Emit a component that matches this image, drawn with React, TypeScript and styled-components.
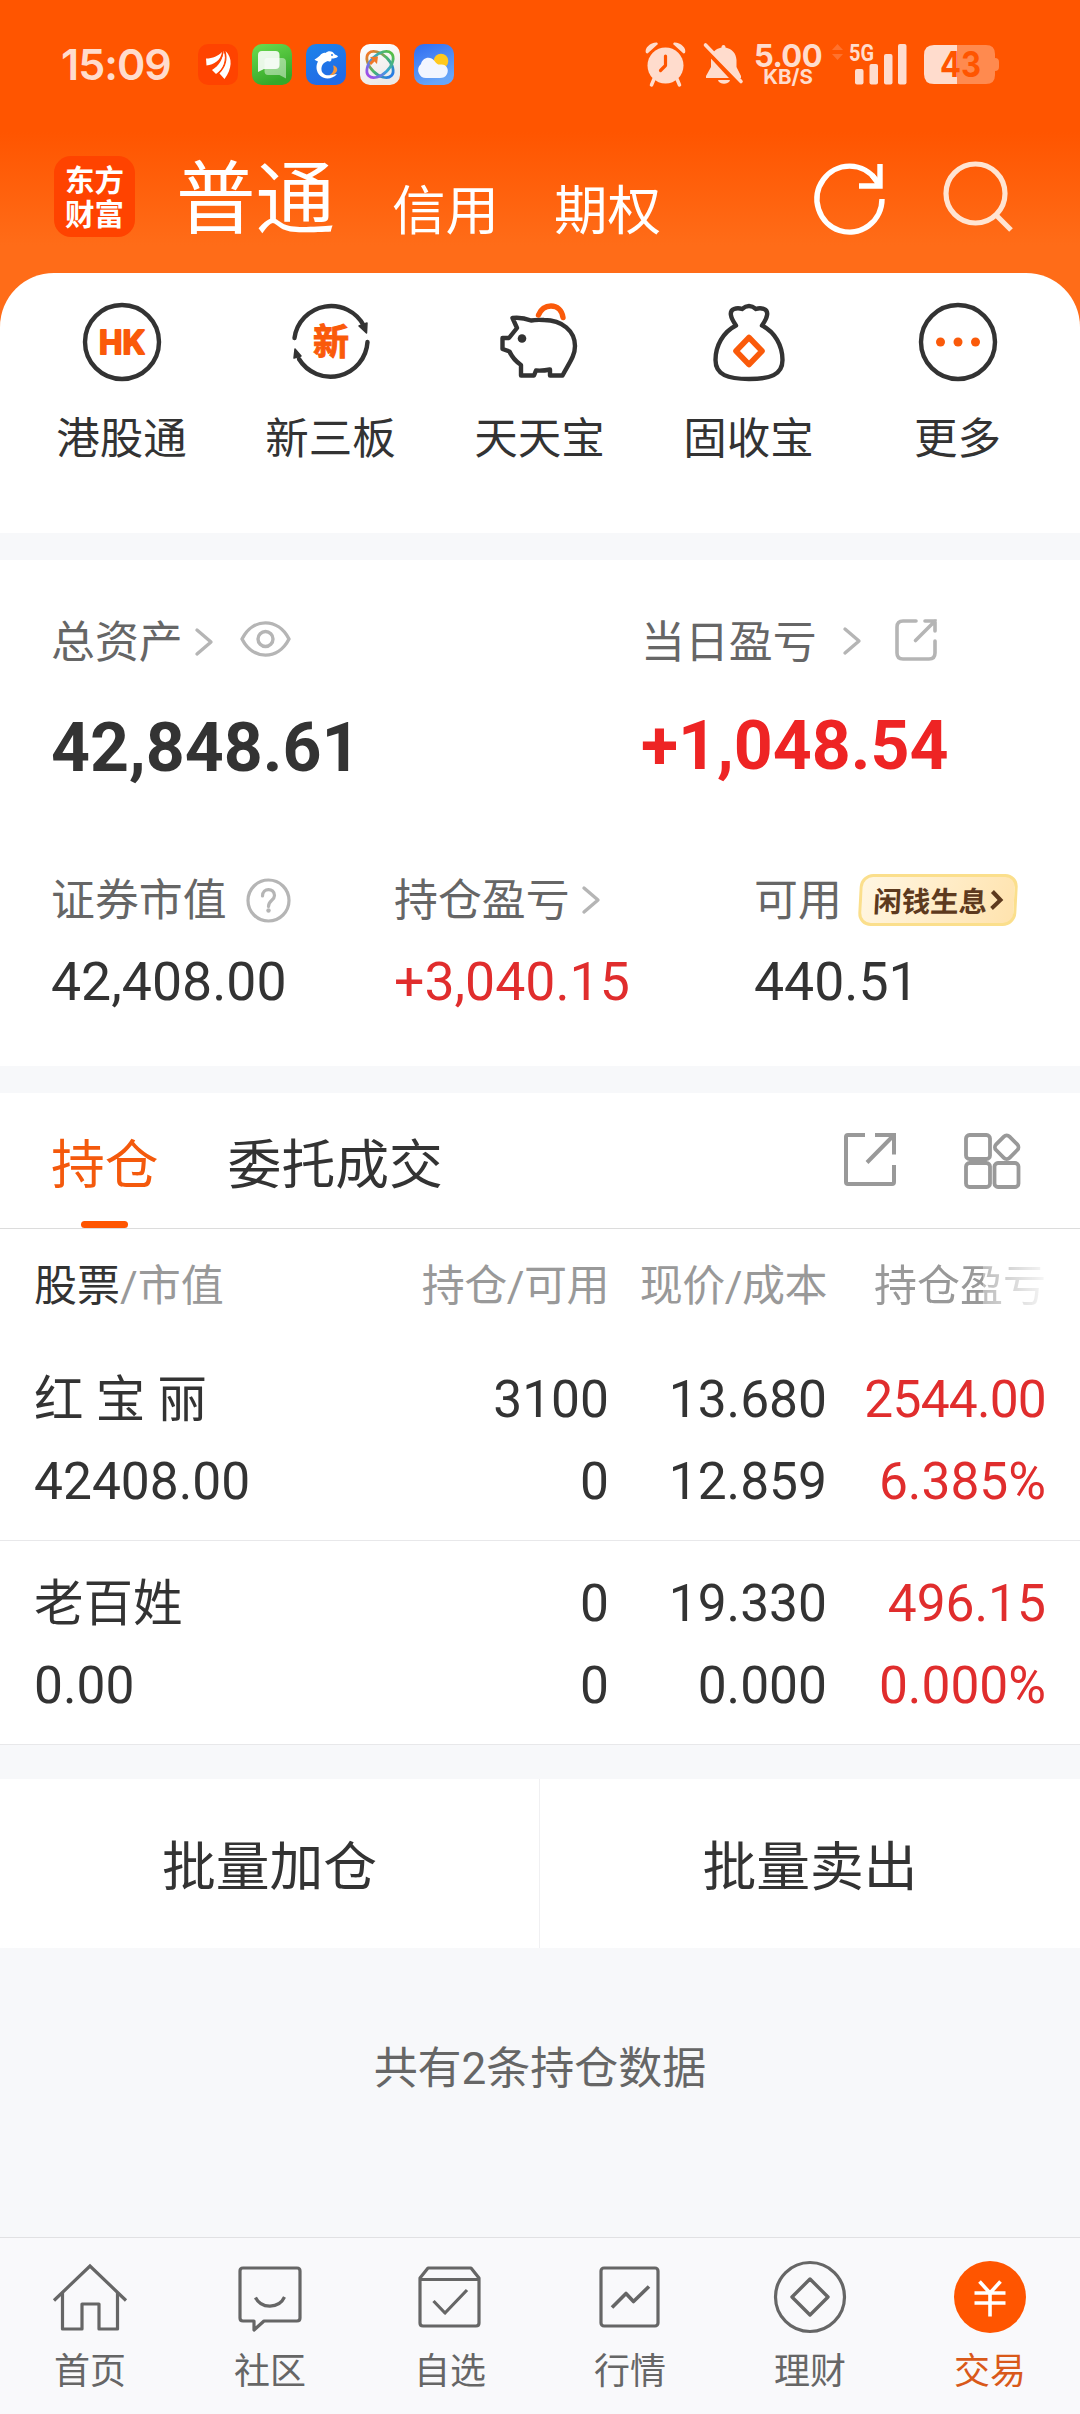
import React from "react";
import styled, { createGlobalStyle } from "styled-components";

const ORANGE = "#ff5500";
const INK = "#333333";
const RED = "#e02d2d";
const STATUS = "#ffdccd";

const GlobalStyle = createGlobalStyle`
  * { box-sizing: border-box; }
  body {
    margin: 0;
    background: #f7f8fa;
    font-family: Roboto, "Noto Sans CJK SC", sans-serif;
    color: ${INK};
  }
  svg { display: block; flex: none; overflow: visible; }
`;

const Screen = styled.div`
  width: 1080px;
  height: 2414px;
  display: flex;
  flex-direction: column;
  overflow: hidden;
  white-space: nowrap;
`;

/* ---------- header ---------- */

const Hero = styled.header`
  height: 533px;
  flex: none;
  display: flex;
  flex-direction: column;
  background: linear-gradient(180deg, ${ORANGE} 0, ${ORANGE} 132px, #ff6c18 245px, #ff6c18 100%);
`;

const StatusBar = styled.div`
  height: 128px;
  flex: none;
  display: flex;
  align-items: center;
  padding: 0 81px 0 61px;
  color: ${STATUS};
`;

const Clock = styled.span`
  width: 137px;
  font: 600 43px/50px Inter, Roboto, sans-serif;
  letter-spacing: -1px;
`;

const AppIcons = styled.div`
  display: flex;
  gap: 14px;
  flex: 1;
`;

const StatusGroup = styled.div`
  display: flex;
  align-items: center;
`;

const NetSpeed = styled.div`
  width: 70px;
  margin: 0 9px 0 9px;
  display: flex;
  flex-direction: column;
  align-items: center;
  font-family: Inter, Roboto, sans-serif;
`;

const SpeedValue = styled.span`
  font-size: 31px;
  font-weight: 700;
  line-height: 25px;
  letter-spacing: -0.6px;
`;

const SpeedUnit = styled.span`
  font-size: 20.5px;
  font-weight: 700;
  line-height: 18px;
`;

const TitleBar = styled.div`
  height: 145px;
  flex: none;
  display: flex;
  align-items: flex-start;
  padding: 28px 66px 0 54px;
  color: #fff;
`;

const Logo = styled.div`
  width: 81px;
  height: 81px;
  border-radius: 17px;
  background: #ff4300;
  display: flex;
  flex-direction: column;
  align-items: center;
  justify-content: center;
  font: 700 29.5px/34px "Noto Sans CJK SC", sans-serif;
  padding-bottom: 3px;
`;

const AccountTabs = styled.nav`
  display: flex;
  align-items: flex-start;
  flex: 1;
  margin-left: 41px;
`;

const AccountTab = styled.span<{ $current?: boolean }>`
  font-size: ${(p) => (p.$current ? 79.5 : 53.5)}px;
  line-height: 90px;
  padding-top: ${(p) => (p.$current ? 0 : 12)}px;
  margin-right: ${(p) => (p.$current ? 57 : 55)}px;
  margin-top: -1px;
`;

const TitleActions = styled.div`
  display: flex;
  gap: 57px;
  padding-top: 5px;
`;

const Shortcuts = styled.section`
  flex: 1;
  display: grid;
  grid-template-columns: repeat(5, 209px);
  justify-content: center;
  background: #fff;
  border-radius: 54px 54px 0 0;
  padding: 29px 1px 0 0;
`;

const Shortcut = styled.div`
  display: flex;
  flex-direction: column;
  align-items: center;
  font-size: 43.5px;
  line-height: 60px;
  gap: 28px;
`;

/* ---------- assets ---------- */

const Assets = styled.section`
  height: 506px;
  margin-top: 27px;
  flex: none;
  background: #fff;
  padding: 41px 0 0 51px;
`;

const AssetRow = styled.div<{ $cols: string; $top?: number }>`
  display: grid;
  grid-template-columns: ${(p) => p.$cols};
  margin-top: ${(p) => p.$top ?? 0}px;
`;

const Label = styled.div`
  display: flex;
  align-items: center;
  height: 84px;
  font-size: 43.9px;
  line-height: 84px;
  color: #666;
`;

const Lifted = styled.span<{ $by: number; $before: number }>`
  margin-left: ${(p) => p.$before}px;
  margin-bottom: ${(p) => p.$by * 2}px;
`;

const Gap = styled.span<{ $w: number }>`
  width: ${(p) => p.$w}px;
  flex: none;
`;

const BigValue = styled.div<{ $up?: boolean }>`
  font-size: 68px;
  font-weight: 700;
  line-height: 120px;
  padding-top: ${(p) => (p.$up ? 1 : 3)}px;
  margin-bottom: ${(p) => (p.$up ? 2 : 0)}px;
  color: ${(p) => (p.$up ? "#ee2424" : INK)};
`;

const Value = styled.div<{ $up?: boolean }>`
  padding-top: 1px;
  font-size: 53.6px;
  line-height: 76px;
  color: ${(p) => (p.$up ? RED : INK)};
`;

const Promo = styled.div`
  width: 158px;
  height: 52px;
  margin: 0 0 2px 17px;
  display: flex;
  align-items: center;
  justify-content: center;
  gap: 2px;
  border: 3px solid #fbdf8c;
  border-radius: 13px;
  background: linear-gradient(110deg, #fff6e2, #ffe3ae);
  transform: skewX(-3deg);
  font: 700 28.5px/44px "Noto Sans CJK SC", sans-serif;
  color: #5d3a1e;
`;

/* ---------- holdings ---------- */

const Holdings = styled.section`
  margin-top: 27px;
  flex: none;
  background: #fff;
`;

const TabBar = styled.div`
  height: 136px;
  display: flex;
  border-bottom: 1px solid #dcdcdc;
  padding: 0 59px 0 51px;
`;

const Tab = styled.div<{ $active?: boolean }>`
  display: flex;
  flex-direction: column;
  align-items: center;
  justify-content: space-between;
  margin-right: 69px;
  padding-top: 33px;
  font-size: 53.8px;
  line-height: 80px;
  color: ${(p) => (p.$active ? "#f4590c" : INK)};
`;

const Underline = styled.i`
  width: 47px;
  height: 7px;
  border-radius: 4px;
  background: ${ORANGE};
`;

const TabTools = styled.div`
  margin-left: auto;
  display: flex;
  gap: 68px;
  padding-top: 40px;
`;

const TableLine = styled.div`
  display: grid;
  grid-template-columns: 375px 200px 218px 219px;
  padding: 0 34px 0 34px;
  text-align: right;

  > :first-child { text-align: left; }
`;

const TableHead = styled(TableLine)`
  height: 108px;
  padding-top: 8px;
  font-size: 43px;
  line-height: 99px;
  color: #999;
`;

const Strong = styled.span`
  color: ${INK};
`;

const PairHead = styled.span`
  letter-spacing: -0.5px;
`;

const Faded = styled.span`
  mask-image: linear-gradient(90deg, #000 156px, rgba(0, 0, 0, 0.65) 156px, rgba(0, 0, 0, 0.08) 100%);
`;

const Stock = styled.div`
  height: 204px;
  padding-top: 22px;
  border-bottom: 1px solid #e8e8ea;
`;

const StockLine = styled(TableLine)`
  font-size: 51.5px;
  line-height: 82px;
`;

const StockName = styled.span`
  font-size: 49.5px;
`;

const Gain = styled.span<{ $tight?: boolean }>`
  color: ${RED};
  letter-spacing: ${(p) => (p.$tight ? "-0.8px" : "0")};
`;

const Actions = styled.div`
  height: 169px;
  margin-top: 34px;
  flex: none;
  display: grid;
  grid-template-columns: 1fr 1fr;
  background: #fff;
`;

const Action = styled.button`
  border: 0;
  border-right: 1px solid #f0f0f2;
  background: none;
  padding: 9px 0 0;
  font: 400 53.8px/160px Roboto, "Noto Sans CJK SC", sans-serif;
  color: ${INK};

  &:last-child { border-right: 0; }
`;

const Summary = styled.div`
  flex: 1;
  padding-top: 91px;
  text-align: center;
  font-size: 44px;
  line-height: 60px;
  color: #666;
`;

/* ---------- bottom navigation ---------- */

const BottomNav = styled.nav`
  height: 177px;
  flex: none;
  display: grid;
  grid-template-columns: repeat(6, 1fr);
  border-top: 1px solid #e1e1e3;
  background: #f9f9fb;
`;

const NavItem = styled.div<{ $active?: boolean }>`
  display: flex;
  flex-direction: column;
  align-items: center;
  gap: 17px;
  padding-top: 23px;
  font-size: 36px;
  line-height: 44px;
  color: ${(p) => (p.$active ? "#d9591a" : "#666")};
`;

/* ---------- icons ---------- */

const AppTile = ({ id, from, to, children }: { id: string; from: string; to: string; children: React.ReactNode }) => (
  <svg width="40" height="41" viewBox="0 0 40 41">
    <defs>
      <linearGradient id={id} x1="0" y1="0" x2="0.4" y2="1">
        <stop offset="0" stopColor={from} />
        <stop offset="1" stopColor={to} />
      </linearGradient>
    </defs>
    <rect width="40" height="41" rx="10" fill={`url(#${id})`} />
    {children}
  </svg>
);

const WingApp = () => (
  <AppTile id="wing" from="#ff4300" to="#ff4300">
    <g fill="#fff">
      <path d="M8 14.500C15 14.500 20 12 24 8C23 16 16 21 8.500 21.500Z" />
      <path d="M14 26C21 22 25 15 25.500 7C30 16 26 24 18 30Z" />
      <path d="M27.500 7C35 14 34 25 26.500 35L21.500 29.500C28 23 30 15 27.500 7Z" />
    </g>
    <path d="M12 24C20 21 24 15 25 8M18.500 31C26 25 29 16 26.500 7" stroke="#ff4300" strokeWidth="1" fill="none" />
  </AppTile>
);

const ChatApp = () => (
  <AppTile id="chat" from="#6cdc4f" to="#35a82a">
    <path d="M14 14H30Q34 14 34 18V34.500L27.500 31H16Q12.500 31 12.500 27V16Z" fill="#fff" opacity="0.45" />
    <path d="M10 7H23.500Q27.500 7 27.500 11V21Q27.500 25 23.500 25H12L6 28V11Q6 7 10 7Z" fill="#fff" opacity="0.88" />
  </AppTile>
);

const DolphinApp = () => (
  <AppTile id="dolphin" from="#1d83ea" to="#216be6">
    <path
      d="M8.500 15.500C11 14 12.500 13 14 11.500C15.500 9.500 18 8.500 19.500 9C22 6.500 26 6.500 28 9.500C29 11 31 11 32 12.500C31 14 28 14.500 25.500 14.500C25.500 17 24.500 18.500 22 17C18 18 15 21 15.500 26C16 30 20 32 24.500 31L31 30C27 35 19 36 14.500 32C10 28 9.500 22 12 17.500C10.500 16.500 9 16.500 8.500 15.500Z"
      fill="#fff"
    />
    <circle cx="26" cy="11" r="0.900" fill="#1d78e8" />
    <path d="M27 21.500C31 22 32.500 26 30 28.500C28.500 30.500 26 31.500 23.500 31C27.500 29 28.500 25 27 21.500Z" fill="#f6973b" />
  </AppTile>
);

const KnotApp = () => (
  <AppTile id="knot" from="#ffffff" to="#ece9e8">
    <defs>
      <linearGradient id="knotA" x1="0" y1="0" x2="1" y2="0">
        <stop offset="0" stopColor="#f07a2a" />
        <stop offset="0.5" stopColor="#49b86b" />
        <stop offset="1" stopColor="#267be8" />
      </linearGradient>
      <linearGradient id="knotB" x1="1" y1="0" x2="0" y2="0">
        <stop offset="0" stopColor="#54bd45" />
        <stop offset="0.5" stopColor="#36a5dc" />
        <stop offset="1" stopColor="#a04de8" />
      </linearGradient>
    </defs>
    <g fill="none" strokeWidth="2.800">
      <ellipse cx="20" cy="20.500" rx="16" ry="9.500" transform="rotate(45 20 20.500)" stroke="url(#knotA)" />
      <ellipse cx="20" cy="20.500" rx="16" ry="9.500" transform="rotate(-45 20 20.500)" stroke="url(#knotB)" />
    </g>
    <path d="M10 13L18 12.500L17 20L14.500 17.500L11 21L9 19L12.500 15.500Z" fill="#f07a2a" />
  </AppTile>
);

const WeatherApp = () => (
  <AppTile id="weather" from="#2f6df2" to="#68a6f7">
    <circle cx="27" cy="17" r="7.300" fill="#ffc91f" />
    <path d="M13 34A8 8 0 0 1 7 20C8 14 16 11 20.500 17C23 20 24 21 27 20.500C32 20 35.500 25 33 30C31.500 33 29 34 26 34Z" fill="#f2f6ff" />
  </AppTile>
);

const AlarmIcon = () => (
  <svg width="41" height="44" viewBox="0 0 41 44" fill={STATUS}>
    <circle cx="20.500" cy="23.500" r="18" />
    <path d="M1 11C-1 6 6 0 12 .5L13 2L2.500 11.500ZM40 11C42 6 35 0 29 .5L28 2L38.500 11.500Z" />
    <path d="M9 37L6.500 43M32 37L34.500 43" stroke={STATUS} strokeWidth="3.500" strokeLinecap="round" />
    <path d="M20.500 14V23.500L15.500 28.500" fill="none" stroke={ORANGE} strokeWidth="3.200" strokeLinecap="round" strokeLinejoin="round" />
  </svg>
);

const MutedBellIcon = () => (
  <svg width="41" height="42" viewBox="0 0 41 42" fill={STATUS}>
    <path d="M20.500 2C22 2 22.500 3 22.500 4.500C29 6 33 10 33.500 17V24L38 33V35H3V33L8 24V17C8 10 12 6 18.500 4.500C18.500 3 19 2 20.500 2Z" />
    <path d="M15 37H27C26 42 16 42 15 37Z" />
    <path d="M-2 1L34 40" stroke={ORANGE} strokeWidth="5" />
    <path d="M2.500 2L38 38.500" stroke={STATUS} strokeWidth="3.600" strokeLinecap="round" />
  </svg>
);

const SignalIcon = () => (
  <svg width="75" height="43" viewBox="0 0 75 43" fill={STATUS}>
    <path d="M0 7L5.500 1L11 7ZM0 11L5.500 17L11 11Z" opacity="0.22" />
    <text x="17" y="18" fontFamily="Roboto, sans-serif" fontWeight="700" fontSize="24" textLength="25" lengthAdjust="spacingAndGlyphs">5G</text>
    <rect x="23" y="26" width="8.500" height="15.500" rx="2" />
    <rect x="37.500" y="21" width="8.500" height="20.500" rx="2" />
    <rect x="52" y="11" width="8.500" height="30.500" rx="2" />
    <rect x="66" y="1" width="8.500" height="40.500" rx="2" />
  </svg>
);

const BatteryIcon = () => (
  <svg width="75" height="39" viewBox="0 0 75 39">
    <path d="M33 0H62Q71 0 71 9V30Q71 39 62 39H33ZM71 13Q75 13 75 17V22Q75 26 71 26Z" fill="#ff8a4f" />
    <path d="M33 0H10Q0 0 0 10V29Q0 39 10 39H33Z" fill={STATUS} />
    <text x="36.500" y="32" textAnchor="middle" fontFamily="Inter, Roboto, sans-serif" fontWeight="700" fontSize="35" fill={ORANGE} textLength="41" lengthAdjust="spacingAndGlyphs">43</text>
  </svg>
);

const RefreshIcon = () => (
  <svg width="72" height="72" viewBox="0 0 72 72" fill="none" stroke="#fff" strokeWidth="5.400">
    <path d="M68 38A32.500 33 0 1 1 62 19" />
    <path d="M66 3V25H45M66 25L58 14" />
  </svg>
);

const SearchIcon = () => (
  <svg width="71" height="72" viewBox="0 0 71 72" fill="none" stroke="#ffe4d2" strokeWidth="5.200">
    <circle cx="32.500" cy="32.500" r="29.500" />
    <path d="M53 54L68 69" />
  </svg>
);

const RingHK = () => (
  <svg width="80" height="80" viewBox="0 0 80 80">
    <circle cx="40" cy="40" r="37" fill="none" stroke={INK} strokeWidth="4.400" />
    <text x="40" y="52" textAnchor="middle" fontFamily="Inter, sans-serif" fontWeight="700" fontSize="33" fill="#fa5a0a" stroke="#fa5a0a" strokeWidth="2" strokeLinejoin="round" textLength="46" lengthAdjust="spacingAndGlyphs">HK</text>
  </svg>
);

const RingNew = () => (
  <svg width="80" height="80" viewBox="0 0 80 80" fill="none" stroke={INK} strokeWidth="4.400" strokeLinecap="round">
    <path d="M3.500 36A37 37 0 0 1 73 24M76.500 40A37 37 0 0 1 8 57" />
    <path d="M68 24L76 21L75.500 31ZM4 47L10 54L3 56Z" fill={INK} strokeWidth="1.500" strokeLinejoin="round" />
    <text x="40" y="53" textAnchor="middle" fontFamily="'Noto Sans CJK SC', sans-serif" fontWeight="700" fontSize="36" fill="#fa5a0a" stroke="#fa5a0a" strokeWidth="1">新</text>
  </svg>
);

const PigIcon = () => (
  <svg width="80" height="80" viewBox="0 0 80 80" fill="none" stroke={INK} strokeWidth="4.400" strokeLinejoin="round">
    <path d="M12.500 16Q22 15 31 18.500Q36 17.500 44 18C62 18 75 29 75 44C75 54 69 61 62.500 73.500H50V67.500Q43 69 36 68.500L34 73.500H21V63C15 59 11.500 54 9.500 49.500L2.500 47V36H9L17 26Z" />
    <circle cx="22" cy="36.500" r="4.300" fill={INK} stroke="none" />
    <path d="M38.500 13C41 7 46 4 51 4C57 4 62 8 63 15.500" stroke="#fa5a0a" strokeWidth="5.400" strokeLinecap="round" />
  </svg>
);

const BagIcon = () => (
  <svg width="80" height="80" viewBox="0 0 80 80" fill="none" stroke={INK} strokeWidth="4.400" strokeLinejoin="round">
    <path d="M27 23.500C21 15 20 9 25 7Q29 5.500 33 7Q40 1 47 7Q51 5.500 55 7C60 9 59 15 53 23.500C66 30 73.500 44 73.500 58C73.500 73 61 77 40 77C19 77 6.500 73 6.500 58C6.500 44 14 30 27 23.500Z" />
    <path d="M40 35.500L53 49L40 62.500L27 49Z" stroke="#fa5a0a" strokeWidth="5.600" />
    <path d="M29 23L25 20M51 23L55 20" stroke="none" />
  </svg>
);

const MoreIcon = () => (
  <svg width="80" height="80" viewBox="0 0 80 80">
    <circle cx="40" cy="40" r="37" fill="none" stroke={INK} strokeWidth="4.400" />
    {[22.5, 40, 57.5].map((cx) => (
      <circle key={cx} cx={cx} cy="40" r="4.500" fill="#fa5a0a" />
    ))}
  </svg>
);

const Chevron = () => (
  <svg width="18" height="28" viewBox="0 0 18 28" fill="none" stroke="#b5b5b5" strokeWidth="3.400" strokeLinecap="round" strokeLinejoin="round">
    <path d="M2 2L16 14L2 26" />
  </svg>
);

const EyeIcon = () => (
  <svg width="51" height="36" viewBox="0 0 51 36" fill="none" stroke="#b5b5b5" strokeWidth="3.400">
    <path d="M2 18C13 -3.500 38 -3.500 49 18C38 39.500 13 39.500 2 18Z" strokeLinejoin="round" />
    <circle cx="25.500" cy="18" r="7.500" />
  </svg>
);

const HelpIcon = () => (
  <svg width="45" height="45" viewBox="0 0 45 45" fill="none" stroke="#b5b5b5" strokeWidth="3.200">
    <circle cx="22.500" cy="22.500" r="20.500" />
    <path d="M16.500 18C16.500 9.500 28.500 9.500 28.500 17.500C28.500 22.500 22.500 22 22.500 28.500" strokeLinecap="round" />
    <circle cx="22.500" cy="32.500" r="2.200" fill="#b5b5b5" stroke="none" />
  </svg>
);

const ShareRound = () => (
  <svg width="42" height="42" viewBox="0 0 42 42" fill="none" stroke="#b5b5b5" strokeWidth="3.600" strokeLinecap="round">
    <path d="M21 2H8Q2 2 2 8V34Q2 40 8 40H34Q40 40 40 34V22" />
    <path d="M30 2H40V12M40 2L20.500 21.500" />
  </svg>
);

const ShareSquare = () => (
  <svg width="52" height="53" viewBox="0 0 52 53" fill="none" stroke="#999" strokeWidth="4">
    <path d="M21 2H4Q2 2 2 4V49Q2 51 4 51H48Q50 51 50 49V32" />
    <path d="M31 2H50V21.500M50 2L23 29.500" />
  </svg>
);

const GridIcon = () => (
  <svg width="57" height="55" viewBox="0 0 57 55" fill="none" stroke="#999" strokeWidth="3.800">
    <rect x="2" y="2" width="24" height="24" rx="3.500" />
    <rect x="2" y="30" width="24" height="24" rx="3.500" />
    <rect x="30.500" y="30" width="24" height="24" rx="3.500" />
    <rect x="33.200" y="4.700" width="19" height="19" rx="4" transform="rotate(45 42.700 14.200)" />
  </svg>
);

const NavSvg = ({ children }: { children: React.ReactNode }) => (
  <svg width="72" height="72" viewBox="0 0 72 72" fill="none" stroke="#666" strokeWidth="3.200" strokeLinejoin="round">
    {children}
  </svg>
);

const HomeIcon = () => (
  <NavSvg>
    <path d="M0 39.500L36 5L72 39.500" strokeLinejoin="miter" />
    <path d="M8.500 32V68H28V43H45V68H63.500V32" />
  </NavSvg>
);

const CommunityIcon = () => (
  <NavSvg>
    <path d="M9 7H63Q66 7 66 10V57Q66 60 63 60H30L20 69V60H9Q6 60 6 57V10Q6 7 9 7Z" />
    <path d="M21.500 36.500C27 48 45 48 50.500 36" />
  </NavSvg>
);

const WatchlistIcon = () => (
  <NavSvg>
    <path d="M6 17L14 7H57L65 17V62Q65 65 62 65H9Q6 65 6 62ZM6 18.500H65" />
    <path d="M19.500 40L31 52L53 29" />
  </NavSvg>
);

const MarketIcon = () => (
  <NavSvg>
    <rect x="7" y="7" width="57" height="58" rx="3" />
    <path d="M18 46.500L32 32.500L39.500 40.500L55 25.500" strokeWidth="3.600" />
  </NavSvg>
);

const WealthIcon = () => (
  <NavSvg>
    <circle cx="36" cy="36" r="34.500" />
    <path d="M36 18L54 36L36 54L18 36Z" strokeWidth="3.400" />
  </NavSvg>
);

const TradeIcon = () => (
  <NavSvg>
    <circle cx="36" cy="36" r="36" fill={ORANGE} stroke="none" />
    <path d="M25.500 20.500L36 32L46.500 20.500M20.500 32H51.500M20.500 42H51.500M36 32V55.500" stroke="#fff" strokeWidth="3.600" />
  </NavSvg>
);

/* ---------- data ---------- */

const shortcuts = [
  { label: "港股通", Icon: RingHK },
  { label: "新三板", Icon: RingNew },
  { label: "天天宝", Icon: PigIcon },
  { label: "固收宝", Icon: BagIcon },
  { label: "更多", Icon: MoreIcon },
];

const stocks = [
  { name: "红 宝 丽", value: "42408.00", held: "3100", free: "0", price: "13.680", cost: "12.859", gain: "2544.00", rate: "6.385%" },
  { name: "老百姓", value: "0.00", held: "0", free: "0", price: "19.330", cost: "0.000", gain: "496.15", rate: "0.000%" },
];

const navItems = [
  { label: "首页", Icon: HomeIcon },
  { label: "社区", Icon: CommunityIcon },
  { label: "自选", Icon: WatchlistIcon },
  { label: "行情", Icon: MarketIcon },
  { label: "理财", Icon: WealthIcon },
  { label: "交易", Icon: TradeIcon, active: true },
];

export default function App() {
  return (
    <Screen>
      <GlobalStyle />
      <Hero>
        <StatusBar>
          <Clock>15:09</Clock>
          <AppIcons>
            <WingApp />
            <ChatApp />
            <DolphinApp />
            <KnotApp />
            <WeatherApp />
          </AppIcons>
          <StatusGroup>
            <AlarmIcon />
            <Gap $w={17} />
            <MutedBellIcon />
            <NetSpeed>
              <SpeedValue>5.00</SpeedValue>
              <SpeedUnit>KB/S</SpeedUnit>
            </NetSpeed>
            <SignalIcon />
            <Gap $w={17} />
            <BatteryIcon />
          </StatusGroup>
        </StatusBar>
        <TitleBar>
          <Logo>
            <span>东方</span>
            <span>财富</span>
          </Logo>
          <AccountTabs>
            <AccountTab $current>普通</AccountTab>
            <AccountTab>信用</AccountTab>
            <AccountTab>期权</AccountTab>
          </AccountTabs>
          <TitleActions>
            <RefreshIcon />
            <SearchIcon />
          </TitleActions>
        </TitleBar>
        <Shortcuts>
          {shortcuts.map(({ label, Icon }) => (
            <Shortcut key={label}>
              <Icon />
              <span>{label}</span>
            </Shortcut>
          ))}
        </Shortcuts>
      </Hero>

      <Assets>
        <AssetRow $cols="590px 1fr">
          <div>
            <Label>
              总资产
              <Lifted $before={12} $by={1}>
                <Chevron />
              </Lifted>
              <Lifted $before={27} $by={4}>
                <EyeIcon />
              </Lifted>
            </Label>
            <BigValue>42,848.61</BigValue>
          </div>
          <div>
            <Label>
              当日盈亏
              <Lifted $before={26} $by={2}>
                <Chevron />
              </Lifted>
              <Lifted $before={34} $by={3}>
                <ShareRound />
              </Lifted>
            </Label>
            <BigValue $up>+1,048.54</BigValue>
          </div>
        </AssetRow>
        <AssetRow $cols="343px 360px 1fr" $top={51}>
          <div>
            <Label>
              证券市值
              <Lifted $before={19} $by={1}>
                <HelpIcon />
              </Lifted>
            </Label>
            <Value>42,408.00</Value>
          </div>
          <div>
            <Label>
              持仓盈亏
              <Lifted $before={12} $by={1}>
                <Chevron />
              </Lifted>
            </Label>
            <Value $up>+3,040.15</Value>
          </div>
          <div>
            <Label>
              可用
              <Promo>
                闲钱生息
                <svg width="13" height="20" viewBox="0 0 13 20" fill="none" stroke="#5d3a1e" strokeWidth="4">
                  <path d="M2 1.500L10.500 10L2 18.500" />
                </svg>
              </Promo>
            </Label>
            <Value>440.51</Value>
          </div>
        </AssetRow>
      </Assets>

      <Holdings>
        <TabBar>
          <Tab $active>
            持仓
            <Underline />
          </Tab>
          <Tab>委托成交</Tab>
          <TabTools>
            <ShareSquare />
            <GridIcon />
          </TabTools>
        </TabBar>
        <TableHead>
          <span>
            <Strong>股票</Strong>/市值
          </span>
          <PairHead>持仓/可用</PairHead>
          <PairHead>现价/成本</PairHead>
          <Faded>持仓盈亏</Faded>
        </TableHead>
        {stocks.map((s) => (
          <Stock key={s.name}>
            <StockLine>
              <StockName>{s.name}</StockName>
              <span>{s.held}</span>
              <span>{s.price}</span>
              <Gain $tight={s.gain.length > 6}>{s.gain}</Gain>
            </StockLine>
            <StockLine>
              <span>{s.value}</span>
              <span>{s.free}</span>
              <span>{s.cost}</span>
              <Gain>{s.rate}</Gain>
            </StockLine>
          </Stock>
        ))}
      </Holdings>

      <Actions>
        <Action>批量加仓</Action>
        <Action>批量卖出</Action>
      </Actions>
      <Summary>共有2条持仓数据</Summary>

      <BottomNav>
        {navItems.map(({ label, Icon, active }) => (
          <NavItem key={label} $active={active}>
            <Icon />
            <span>{label}</span>
          </NavItem>
        ))}
      </BottomNav>
    </Screen>
  );
}
